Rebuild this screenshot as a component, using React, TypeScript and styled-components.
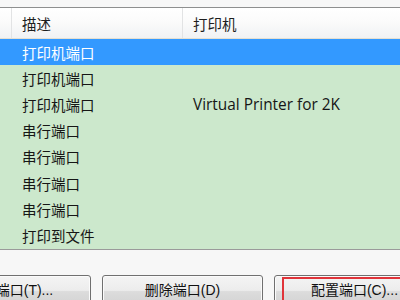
import React from 'react';
import styled, { createGlobalStyle } from 'styled-components';

const Global = createGlobalStyle`
  html, body {
    margin: 0;
    padding: 0;
    width: 400px;
    height: 300px;
    overflow: hidden;
    background: #f7f7f7;
    font-family: "Segoe UI", "Liberation Sans", "Noto Sans CJK SC", sans-serif;
  }
`;

// the dialog is wider than the shot: its left column is out of frame
const Dialog = styled.div`
  width: 560px;
  margin-left: -80px;
  padding-top: 7px;
`;

const List = styled.div`
  border-top: 1px solid #8e8f8f;
  border-bottom: 1px solid #9a9a9a;
  background: #cce8cc;
`;

const cols = '92px 171px 1fr';

const Header = styled.div`
  display: grid;
  grid-template-columns: ${cols};
  height: 30px;
  background: linear-gradient(#ffffff 0%, #fbfbfb 45%, #f1f2f4 100%);
  border-bottom: 1px solid #e4dfd2;
`;

const HeadCell = styled.div<{ $last?: boolean }>`
  display: flex;
  align-items: center;
  padding-left: 10px;
  font-size: 14.5px;
  color: #1e1e1e;
  border-right: ${p => (p.$last ? 'none' : '1px solid #e2e3e4')};
`;

const Row = styled.div<{ $selected?: boolean }>`
  display: grid;
  grid-template-columns: ${cols};
  height: 26.2px;
  align-items: center;
  background: ${p => (p.$selected ? '#3399ff' : 'transparent')};
  color: ${p => (p.$selected ? '#ffffff' : '#161616')};
  font-size: 14.5px;
`;

const Cell = styled.div`
  padding-left: 10px;
  white-space: nowrap;
`;

const Latin = styled.span`
  font-family: "Open Sans", "Liberation Sans", sans-serif;
  font-size: 15.4px;
`;

const ButtonBar = styled.div`
  display: flex;
  gap: 11px;
  padding-top: 25px;
  margin-left: 10px;
`;

const Button = styled.button<{ $focused?: boolean }>`
  position: relative;
  width: 161px;
  height: 32px;
  flex: none;
  border: 1px solid #707070;
  border-radius: 3px;
  background: linear-gradient(#f4f4f4 0%, #ececec 48%, #dcdcdc 52%, #d2d2d2 100%);
  font-family: "Liberation Sans", "Noto Sans CJK SC", sans-serif;
  font-size: 14px;
  color: #111;
  padding: 0 0 4px 0;
  box-shadow: inset 0 0 0 1px #fbfbfb;
  &::after {
    content: '';
    display: ${p => (p.$focused ? 'block' : 'none')};
    position: absolute;
    left: 7px;
    top: 1px;
    right: -20px;
    bottom: -10px;
    border: 2.5px solid #e0343a;
  }
`;

const rows: { desc: string; printer?: string }[] = [
  { desc: '打印机端口' },
  { desc: '打印机端口' },
  { desc: '打印机端口', printer: 'Virtual Printer for 2K' },
  { desc: '串行端口' },
  { desc: '串行端口' },
  { desc: '串行端口' },
  { desc: '串行端口' },
  { desc: '打印到文件' },
];

export default function App() {
  return (
    <>
      <Global />
      <Dialog>
        <List>
          <Header>
            <HeadCell />
            <HeadCell>描述</HeadCell>
            <HeadCell $last>打印机</HeadCell>
          </Header>
          {rows.map((r, i) => (
            <Row key={i} $selected={i === 0}>
              <Cell />
              <Cell>{r.desc}</Cell>
              <Cell>{r.printer && <Latin>{r.printer}</Latin>}</Cell>
            </Row>
          ))}
        </List>
        <ButtonBar>
          <Button>添加端口(T)...</Button>
          <Button>删除端口(D)</Button>
          <Button $focused>配置端口(C)...</Button>
        </ButtonBar>
      </Dialog>
    </>
  );
}
